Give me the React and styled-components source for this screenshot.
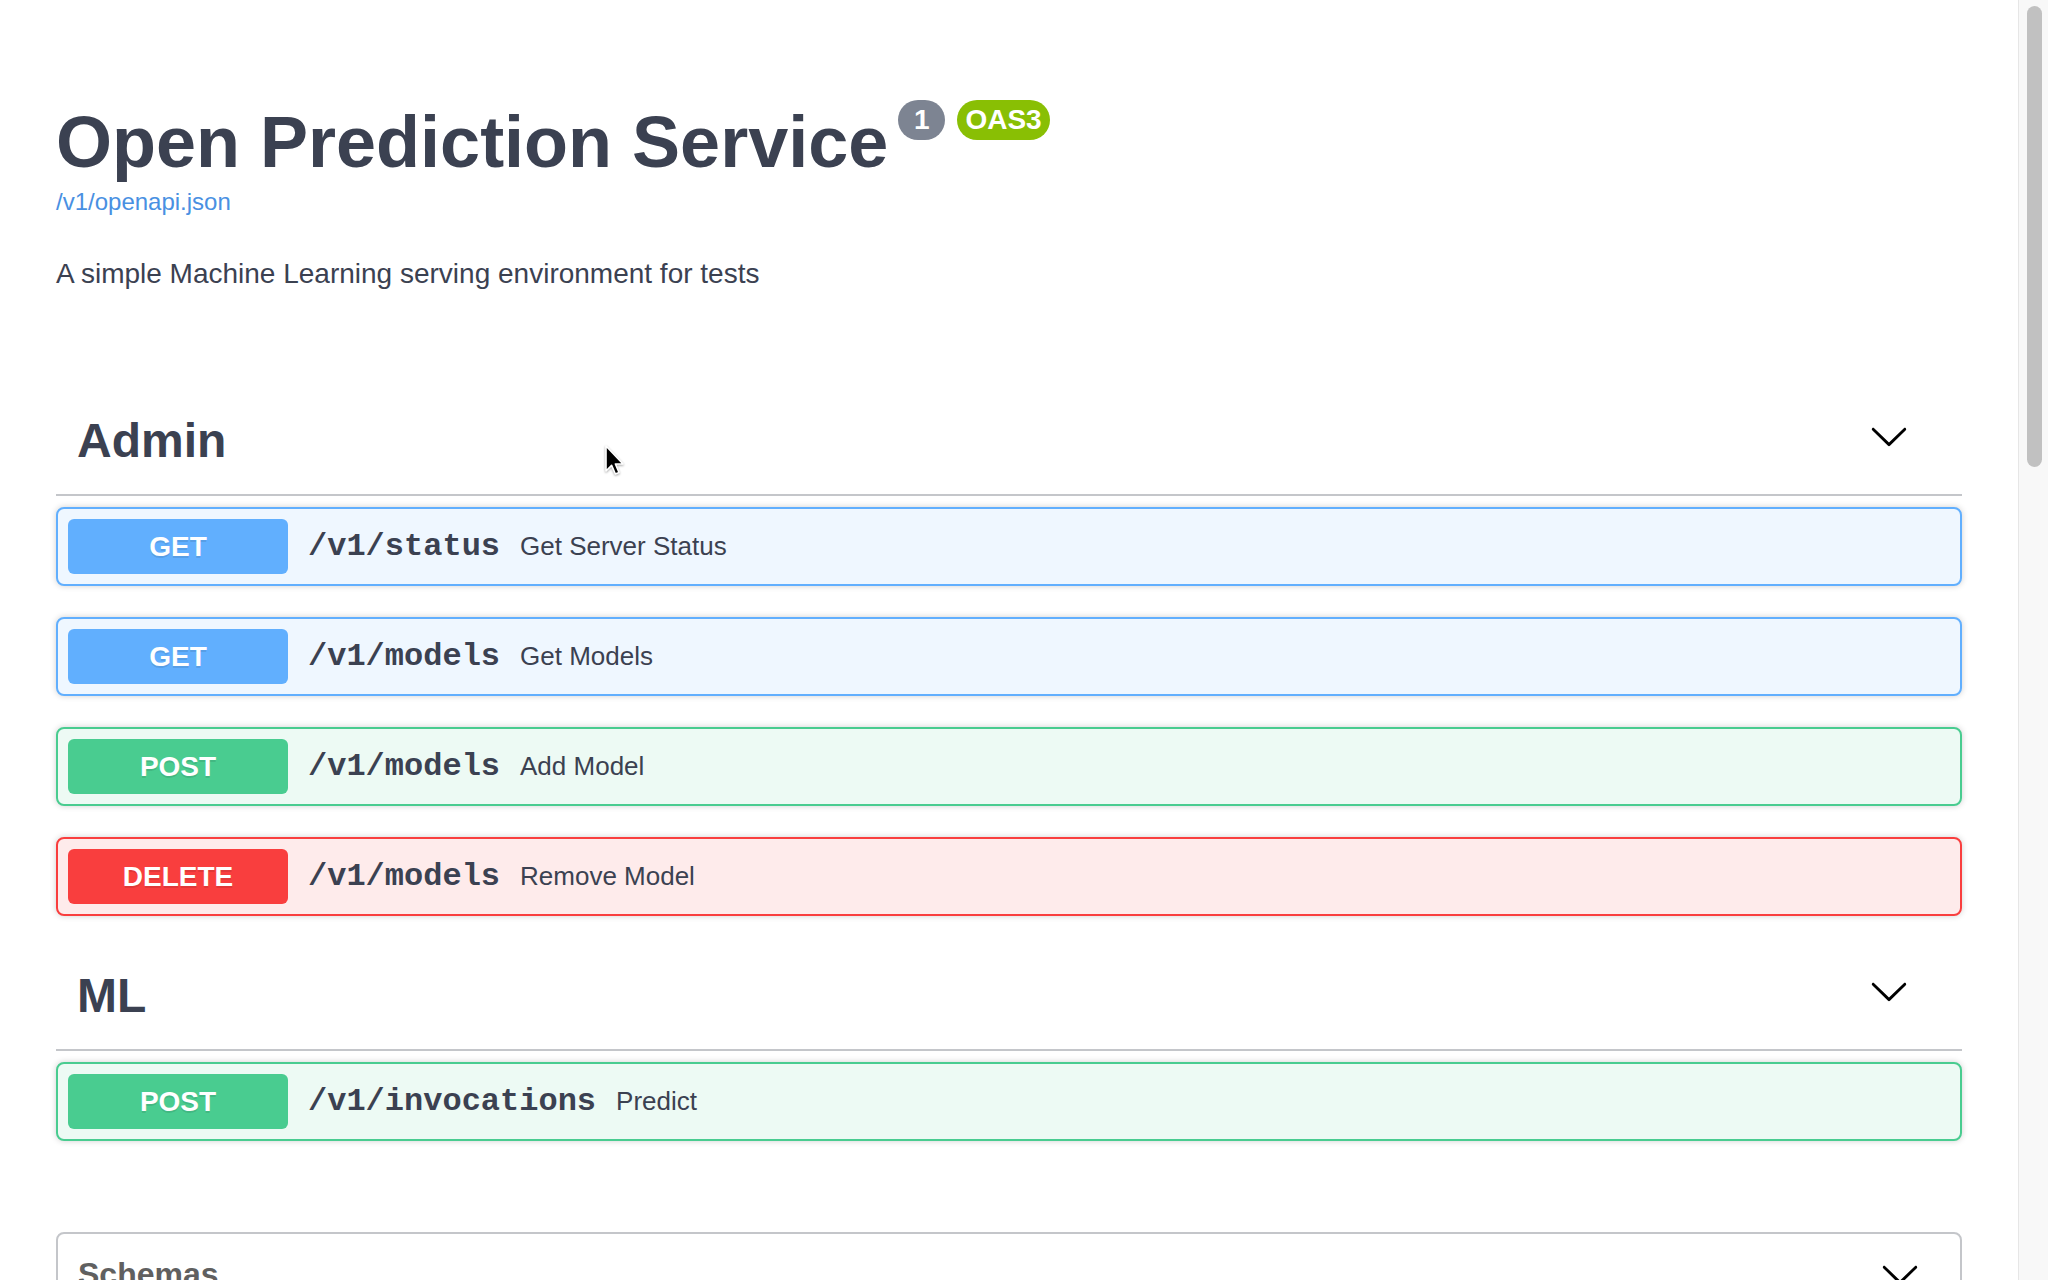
import React from 'react';
import styled, { createGlobalStyle } from 'styled-components';

const GlobalStyle = createGlobalStyle`
  html, body { margin: 0; padding: 0; height: 100%; overflow: hidden; background: #fff; }
  #root { height: 100%; }
  * { box-sizing: border-box; }
`;

const METHODS = {
  GET: { color: '#61affe', bg: '#eff7ff' },
  POST: { color: '#49cc90', bg: '#edfaf4' },
  DELETE: { color: '#f93e3e', bg: '#feebeb' },
};

const SECTIONS = [
  {
    name: 'Admin',
    ops: [
      { method: 'GET', path: '/v1/status', desc: 'Get Server Status' },
      { method: 'GET', path: '/v1/models', desc: 'Get Models' },
      { method: 'POST', path: '/v1/models', desc: 'Add Model' },
      { method: 'DELETE', path: '/v1/models', desc: 'Remove Model' },
    ],
  },
  {
    name: 'ML',
    ops: [{ method: 'POST', path: '/v1/invocations', desc: 'Predict' }],
  },
];

const Window = styled.div`
  display: flex;
  height: 100vh;
  background: #fff;
  font-family: "Liberation Sans", Arial, Helvetica, sans-serif;
  color: #3b4151;
`;

const Viewport = styled.div`
  position: relative;
  flex: 1;
  min-width: 0;
  overflow: hidden;
`;

const ScrollTrack = styled.div`
  flex: 0 0 30px;
  padding: 6px 6px 0 8px;
  background: #f8f8f8;
  border-left: 1px solid #e6e6e6;
`;

const ScrollThumb = styled.div`
  height: 461px;
  border-radius: 8px;
  background: #c1c1c1;
`;

const Page = styled.main`
  display: flex;
  flex-direction: column;
  padding: 106px 56px 0;
`;

const TitleRow = styled.hgroup`
  display: flex;
  align-items: flex-start;
  margin: 0;
`;

const Title = styled.h2`
  margin: 0;
  font-size: 72px;
  line-height: 72px;
  font-weight: 700;
  color: #3b4151;
`;

const Badge = styled.small`
  margin: -6px 0 0 ${(p) => p.$gap}px;
  height: 40px;
  padding: 0 8px;
  border-radius: 57px;
  background: ${(p) => p.$bg};
  color: #fff;
  font-size: 28px;
  font-weight: 700;
  line-height: 40px;
  white-space: pre;
`;

const SpecLink = styled.a`
  align-self: flex-start;
  margin-top: 10px;
  font-size: 24px;
  line-height: 28px;
  color: #4990e2;
  text-decoration: none;
`;

const Description = styled.p`
  margin: 42px 0 102px;
  font-size: 28px;
  line-height: 32px;
  color: #3b4151;
`;

const TagSection = styled.section`
  display: flex;
  flex-direction: column;
`;

const TagHeader = styled.div`
  display: flex;
  align-items: center;
  padding: 18px 41px 22px 21px;
  border-bottom: 2px solid rgba(59, 65, 81, 0.3);
  margin-bottom: 11px;
`;

const TagName = styled.h3`
  flex: 1;
  margin: 0;
  font-size: 48px;
  line-height: 62px;
  font-weight: 700;
  color: #3b4151;
`;

const ExpandButton = styled.button`
  display: flex;
  padding: 0 12px;
  margin-top: ${(p) => p.$shift || 0}px;
  border: none;
  background: none;
  cursor: pointer;
`;

const OpBlock = styled.div`
  display: flex;
  align-items: center;
  padding: 10px;
  margin-bottom: 31px;
  border: 2px solid ${(p) => p.$color};
  border-radius: 8px;
  background: ${(p) => p.$bg};
  box-shadow: 0 0 6px rgba(0, 0, 0, 0.19);
`;

const Method = styled.span`
  display: flex;
  align-items: center;
  justify-content: center;
  width: 220px;
  height: 55px;
  border-radius: 6px;
  background: ${(p) => p.$color};
  color: #fff;
  font-size: 28px;
  font-weight: 700;
  text-shadow: 0 2px 0 rgba(0, 0, 0, 0.1);
`;

const Path = styled.span`
  padding: 0 20px;
  font-family: "Liberation Mono", "Courier New", monospace;
  font-weight: 700;
  font-size: 32px;
  color: #3b4151;
`;

const Summary = styled.span`
  font-size: 26px;
  color: #3b4151;
`;

const Models = styled.section`
  margin-top: 60px;
  border: 2px solid rgba(59, 65, 81, 0.3);
  border-radius: 8px;
`;

const ModelsHeader = styled.h4`
  display: flex;
  align-items: center;
  margin: 0;
  padding: 20px 40px 20px 20px;
  font-size: 32px;
  font-weight: 700;
  color: #606060;
`;

const ModelsTitle = styled.span`
  flex: 1;
`;

const Cursor = styled.svg`
  position: absolute;
  left: 604px;
  top: 444px;
  filter: drop-shadow(0 1px 1px rgba(0, 0, 0, 0.35));
  pointer-events: none;
`;

const ArrowDown = () => (
  <svg width="40" height="40" viewBox="0 0 20 20" aria-hidden="true">
    <path
      fill="#000"
      d="M17.418 6.109c.272-.268.709-.268.979 0s.271.701 0 .969l-7.908 7.83c-.27.268-.707.268-.979 0l-7.908-7.83c-.27-.268-.27-.701 0-.969.271-.268.709-.268.979 0L10 13.25l7.418-7.141z"
    />
  </svg>
);

const Operation = ({ method, path, desc }) => {
  const m = METHODS[method];
  return (
    <OpBlock $color={m.color} $bg={m.bg}>
      <Method $color={m.color}>{method}</Method>
      <Path>{path}</Path>
      <Summary>{desc}</Summary>
    </OpBlock>
  );
};

export default function App() {
  return (
    <>
      <GlobalStyle />
      <Window>
        <Viewport>
          <Page>
            <TitleRow>
              <Title>Open Prediction Service</Title>
              <Badge $bg="#7d8492" $gap={10}> 1 </Badge>
              <Badge $bg="#89bf04" $gap={12}>OAS3</Badge>
            </TitleRow>
            <SpecLink href="#">/v1/openapi.json</SpecLink>
            <Description>A simple Machine Learning serving environment for tests</Description>

            {SECTIONS.map((s) => (
              <TagSection key={s.name}>
                <TagHeader>
                  <TagName>{s.name}</TagName>
                  <ExpandButton $shift={-10}>
                    <ArrowDown />
                  </ExpandButton>
                </TagHeader>
                {s.ops.map((op, i) => (
                  <Operation key={i} {...op} />
                ))}
              </TagSection>
            ))}

            <Models>
              <ModelsHeader>
                <ModelsTitle>Schemas</ModelsTitle>
                <ArrowDown />
              </ModelsHeader>
            </Models>
          </Page>

          <Cursor width="22" height="34" viewBox="0 0 22 34">
            <path
              d="M2 2 L2 27 L7.6 21.4 L11.4 30 L15 28.4 L11.4 20 L19 20 Z"
              fill="#000"
              stroke="#fff"
              strokeWidth="1.6"
              strokeLinejoin="round"
            />
          </Cursor>
        </Viewport>
        <ScrollTrack>
          <ScrollThumb />
        </ScrollTrack>
      </Window>
    </>
  );
}
